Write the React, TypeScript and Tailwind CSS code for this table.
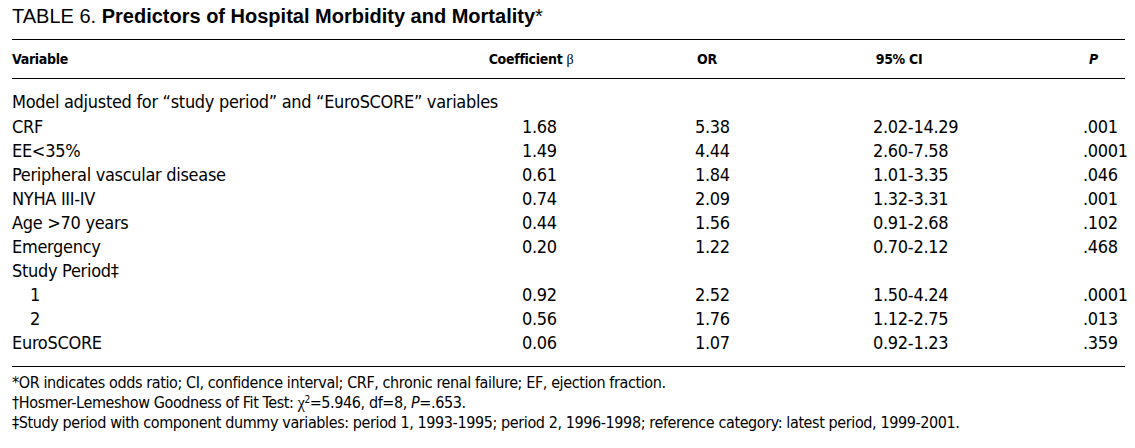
import React from 'react'

interface Row {
  label: string
  indent?: boolean
  coef?: string
  or?: string
  ci?: string
  p?: string
}

const rows: Row[] = [
  { label: 'Model adjusted for \u201cstudy period\u201d and \u201cEuroSCORE\u201d variables' },
  { label: 'CRF', coef: '1.68', or: '5.38', ci: '2.02-14.29', p: '.001' },
  { label: 'EE<35%', coef: '1.49', or: '4.44', ci: '2.60-7.58', p: '.0001' },
  { label: 'Peripheral vascular disease', coef: '0.61', or: '1.84', ci: '1.01-3.35', p: '.046' },
  { label: 'NYHA III-IV', coef: '0.74', or: '2.09', ci: '1.32-3.31', p: '.001' },
  { label: 'Age >70 years', coef: '0.44', or: '1.56', ci: '0.91-2.68', p: '.102' },
  { label: 'Emergency', coef: '0.20', or: '1.22', ci: '0.70-2.12', p: '.468' },
  { label: 'Study Period\u2021' },
  { label: '1', indent: true, coef: '0.92', or: '2.52', ci: '1.50-4.24', p: '.0001' },
  { label: '2', indent: true, coef: '0.56', or: '1.76', ci: '1.12-2.75', p: '.013' },
  { label: 'EuroSCORE', coef: '0.06', or: '1.07', ci: '0.92-1.23', p: '.359' },
]

const cols = 'grid grid-cols-[428px_182px_170px_214px_119px]'

export default function App() {
  return (
    <div className="w-[1135px] h-[448px] bg-white text-black px-3 pt-[4px] font-['DejaVu_Sans_Condensed',sans-serif]">
      {/* title */}
      <div className="font-['Liberation_Sans',Arial,sans-serif] text-[20px] leading-[24px] h-[35px] whitespace-nowrap">
        TABLE 6. <span className="font-bold">Predictors of Hospital Morbidity and Mortality</span>*
      </div>

      <div className="w-[1113px] border-t border-black" />

      {/* header */}
      <div className={`${cols} h-[38px] items-center text-[14px] tracking-[-0.3px] font-bold leading-none`}>
        <div>Variable</div>
        <div className="text-center">
          Coefficient <span className="font-normal font-['Liberation_Serif',serif]">&beta;</span>
        </div>
        <div className="text-center">OR</div>
        <div className="text-center">95% CI</div>
        <div className="text-right pr-[27px] italic">P</div>
      </div>

      <div className="w-[1113px] border-t border-black" />

      {/* body */}
      <div className="pt-[11px] pb-[11px] text-[18px] tracking-[-0.3px] leading-[24px]">
        {rows.map((r, i) => (
          <div key={i} className={`${cols} ${i === 0 ? 'h-[25px]' : 'h-[24px]'}`}>
            <div className={`whitespace-nowrap ${r.indent ? 'pl-[18px]' : ''}`}>{r.label}</div>
            <div className="pl-[82px]">{r.coef}</div>
            <div className="pl-[73px]">{r.or}</div>
            <div className="pl-[81px]">{r.ci}</div>
            <div className="pl-[77px]">{r.p}</div>
          </div>
        ))}
      </div>

      <div className="w-[1113px] border-t border-black" />

      {/* footnotes */}
      <div className="pt-[6px] text-[16px] tracking-[-0.4px] leading-[20px] whitespace-nowrap">
        <div>*OR indicates odds ratio; CI, confidence interval; CRF, chronic renal failure; EF, ejection fraction.</div>
        <div>
          {'\u2020'}Hosmer-Lemeshow Goodness of Fit Test: <span className="font-['Liberation_Serif',serif]">&chi;</span>
          <sup className="text-[10px]">2</sup>=5.946, df=8, <span className="italic">P</span>=.653.
        </div>
        <div>
          {'\u2021'}Study period with component dummy variables: period 1, 1993-1995; period 2, 1996-1998; reference category: latest period, 1999-2001.
        </div>
      </div>
    </div>
  )
}
